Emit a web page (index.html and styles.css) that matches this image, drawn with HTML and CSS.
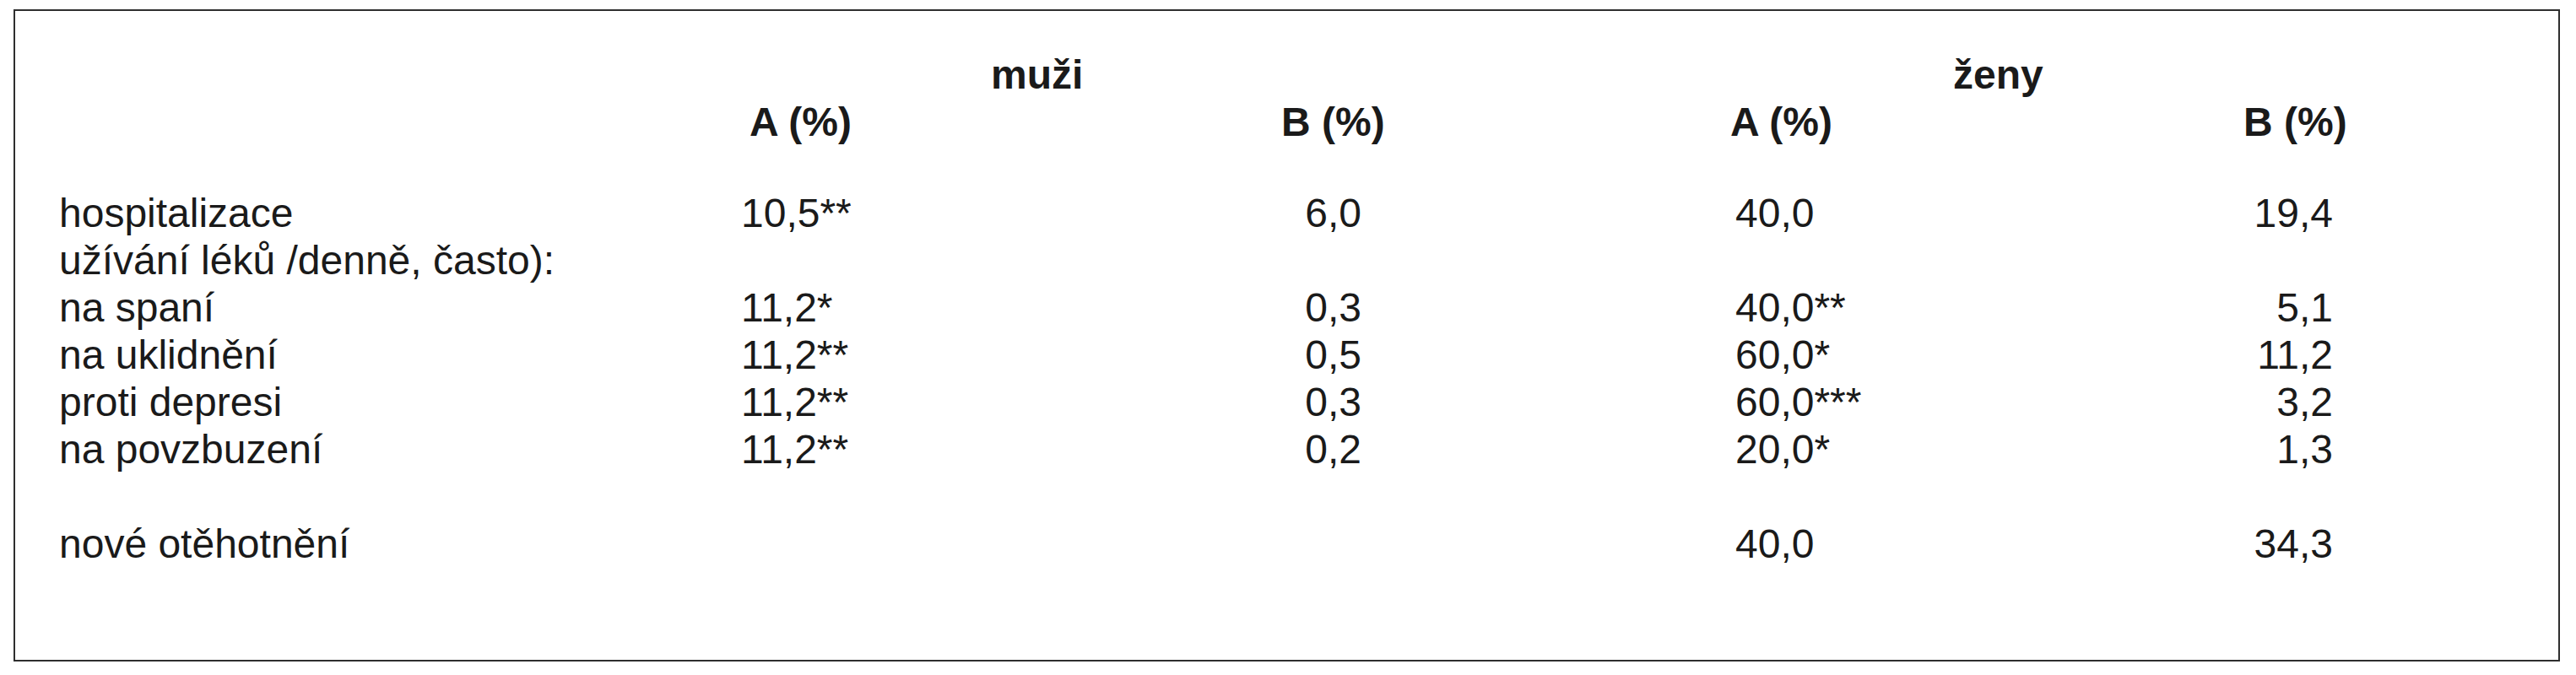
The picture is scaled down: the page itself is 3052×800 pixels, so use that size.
FILE: index.html
```html
<!DOCTYPE html>
<html lang="cs">
<head>
<meta charset="utf-8">
<title>Tabulka</title>
<link rel="stylesheet" href="styles.css">
</head>
<body>
<div class="box">
  <div class="row group">
    <span class="g-m">muži</span>
    <span class="g-z">ženy</span>
  </div>
  <div class="row sub">
    <span class="h-ma">A (%)</span>
    <span class="h-mb">B (%)</span>
    <span class="h-za">A (%)</span>
    <span class="h-zb">B (%)</span>
  </div>
  <div class="row first">
    <span class="label">hospitalizace</span>
    <span class="ma">10,5**</span>
    <span class="mb">6,0</span>
    <span class="za">40,0</span>
    <span class="zb">19,4</span>
  </div>
  <div class="row">
    <span class="label">užívání léků /denně, často):</span>
  </div>
  <div class="row">
    <span class="label">na spaní</span>
    <span class="ma">11,2*</span>
    <span class="mb">0,3</span>
    <span class="za">40,0**</span>
    <span class="zb">5,1</span>
  </div>
  <div class="row">
    <span class="label">na uklidnění</span>
    <span class="ma">11,2**</span>
    <span class="mb">0,5</span>
    <span class="za">60,0*</span>
    <span class="zb">11,2</span>
  </div>
  <div class="row">
    <span class="label">proti depresi</span>
    <span class="ma">11,2**</span>
    <span class="mb">0,3</span>
    <span class="za">60,0***</span>
    <span class="zb">3,2</span>
  </div>
  <div class="row">
    <span class="label">na povzbuzení</span>
    <span class="ma">11,2**</span>
    <span class="mb">0,2</span>
    <span class="za">20,0*</span>
    <span class="zb">1,3</span>
  </div>
  <div class="row last">
    <span class="label">nové otěhotnění</span>
    <span class="za">40,0</span>
    <span class="zb">34,3</span>
  </div>
</div>
</body>
</html>
```

FILE: styles.css
```css
html, body {
  margin: 0;
  padding: 0;
  background: #ffffff;
}

body {
  font-family: "Liberation Sans", Arial, Helvetica, sans-serif;
  font-size: 48px;
  color: #1a1a1a;
}

.box {
  margin: 11px 0 0 16px;
  width: 3013px;
  height: 721px;
  padding-top: 48px;
  border: 2px solid #2e2e2e;
}

.row {
  display: grid;
  grid-template-columns: 808px 322px 413px 443px 400px 308px;
  padding-left: 52px;
  line-height: 56px;
  height: 56px;
  white-space: nowrap;
}

.group,
.sub {
  font-weight: bold;
}

.first {
  margin-top: 52px;
}

.last {
  margin-top: 56px;
}

.label { grid-column: 1; }
.ma { grid-column: 2; }
.mb { grid-column: 3; text-align: right; }
.za { grid-column: 5; }
.zb { grid-column: 6; text-align: right; }

.g-m { grid-column: 2 / 4; padding-left: 296px; }
.g-z { grid-column: 5 / 7; padding-left: 258px; }

.h-ma { grid-column: 2; padding-left: 10px; }
.h-mb { grid-column: 3; padding-left: 318px; }
.h-za { grid-column: 5; margin-left: -6px; }
.h-zb { grid-column: 6; padding-left: 202px; }
```
